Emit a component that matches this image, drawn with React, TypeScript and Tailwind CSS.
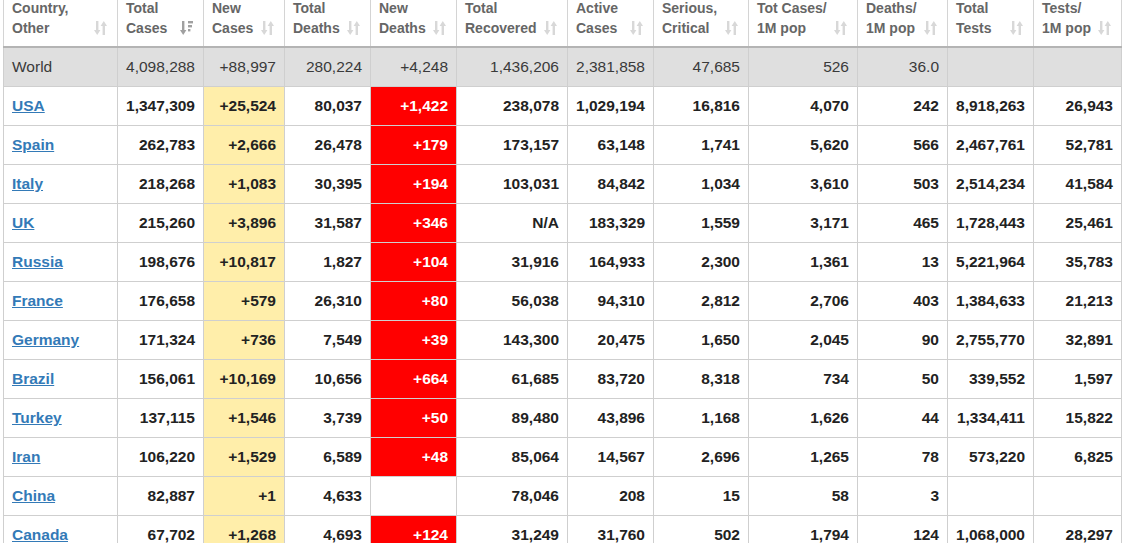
import React from "react"

type Row = {
  name: string
  cells: string[]
}

const headers = [
  ["Country,", "Other"],
  ["Total", "Cases"],
  ["New", "Cases"],
  ["Total", "Deaths"],
  ["New", "Deaths"],
  ["Total", "Recovered"],
  ["Active", "Cases"],
  ["Serious,", "Critical"],
  ["Tot Cases/", "1M pop"],
  ["Deaths/", "1M pop"],
  ["Total", "Tests"],
  ["Tests/", "1M pop"],
]

const widths = [114, 86, 81, 86, 86, 111, 86, 95, 109, 90, 86, 88]

const world = ["4,098,288", "+88,997", "280,224", "+4,248", "1,436,206", "2,381,858", "47,685", "526", "36.0", "", ""]

const rows: Row[] = [
  { name: "USA", cells: ["1,347,309", "+25,524", "80,037", "+1,422", "238,078", "1,029,194", "16,816", "4,070", "242", "8,918,263", "26,943"] },
  { name: "Spain", cells: ["262,783", "+2,666", "26,478", "+179", "173,157", "63,148", "1,741", "5,620", "566", "2,467,761", "52,781"] },
  { name: "Italy", cells: ["218,268", "+1,083", "30,395", "+194", "103,031", "84,842", "1,034", "3,610", "503", "2,514,234", "41,584"] },
  { name: "UK", cells: ["215,260", "+3,896", "31,587", "+346", "N/A", "183,329", "1,559", "3,171", "465", "1,728,443", "25,461"] },
  { name: "Russia", cells: ["198,676", "+10,817", "1,827", "+104", "31,916", "164,933", "2,300", "1,361", "13", "5,221,964", "35,783"] },
  { name: "France", cells: ["176,658", "+579", "26,310", "+80", "56,038", "94,310", "2,812", "2,706", "403", "1,384,633", "21,213"] },
  { name: "Germany", cells: ["171,324", "+736", "7,549", "+39", "143,300", "20,475", "1,650", "2,045", "90", "2,755,770", "32,891"] },
  { name: "Brazil", cells: ["156,061", "+10,169", "10,656", "+664", "61,685", "83,720", "8,318", "734", "50", "339,552", "1,597"] },
  { name: "Turkey", cells: ["137,115", "+1,546", "3,739", "+50", "89,480", "43,896", "1,168", "1,626", "44", "1,334,411", "15,822"] },
  { name: "Iran", cells: ["106,220", "+1,529", "6,589", "+48", "85,064", "14,567", "2,696", "1,265", "78", "573,220", "6,825"] },
  { name: "China", cells: ["82,887", "+1", "4,633", "", "78,046", "208", "15", "58", "3", "", ""] },
  { name: "Canada", cells: ["67,702", "+1,268", "4,693", "+124", "31,249", "31,760", "502", "1,794", "124", "1,068,000", "28,297"] },
]

function SortIcon({ active }: { active?: boolean }) {
  const c = active ? "#a0a0a0" : "#d8d8d8"
  return (
    <svg width="13" height="16" viewBox="0 0 13 16" className="shrink-0">
      {/* down arrow */}
      <rect x="2" y="1" width="2.4" height="10" fill={c} />
      <path d="M0 10 H6.4 L3.2 15 Z" fill={c} />
      {active ? (
        <>
          <rect x="8" y="1" width="5" height="2.4" fill={c} />
          <rect x="8" y="5" width="4" height="2.4" fill={c} />
          <rect x="8" y="9" width="2.4" height="2.4" fill={c} />
        </>
      ) : (
        <>
          <path d="M6.6 6 H13 L9.8 1 Z" fill={c} />
          <rect x="8.6" y="5" width="2.4" height="10" fill={c} />
        </>
      )}
    </svg>
  )
}

export default function App() {
  return (
    <div
      className="bg-white w-[1123px] h-[543px] overflow-hidden pl-[3px]"
      style={{ fontFamily: '"Liberation Sans", Arial, sans-serif' }}
    >
      <table className="table-fixed border-collapse w-[1118px] -mt-[2px]">
        <colgroup>
          {widths.map((w, i) => (
            <col key={i} style={{ width: w }} />
          ))}
        </colgroup>
        <thead>
          <tr>
            {headers.map((h, i) => (
              <th
                key={i}
                className="h-[49px] border-x border-[#d4d4d4] border-b-2 border-b-[#b4b4b4] px-2 p-0 text-left align-top font-bold text-[14px] leading-5 text-[#666]"
              >
                <div>{h[0]}</div>
                <div className="flex items-center justify-between pr-[2px]">
                  <span>{h[1]}</span>
                  <SortIcon active={i === 1} />
                </div>
              </th>
            ))}
          </tr>
        </thead>
        <tbody>
          <tr className="bg-[#dfdfdf] text-[15.5px] text-[#3a3a3a]">
            <td className="h-[39px] border border-[#cfcfcf] pl-2 text-left">World</td>
            {world.map((v, i) => (
              <td key={i} className="h-[39px] border border-[#cfcfcf] pr-[8px] text-right">
                {v}
              </td>
            ))}
          </tr>
          {rows.map((r) => (
            <tr key={r.name} className="text-[15.5px] font-bold text-[#222]">
              <td className="h-[39px] border border-[#cfcfcf] pl-2 text-left">
                <a href="#" className="text-[#337ab7] underline">
                  {r.name}
                </a>
              </td>
              {r.cells.map((v, i) => {
                let cls = "h-[39px] border border-[#cfcfcf] pr-[8px] text-right"
                if (i === 1) cls += " bg-[#ffeeaa]"
                if (i === 3 && v) cls += " bg-[#ff0000] text-white"
                return (
                  <td key={i} className={cls}>
                    {v}
                  </td>
                )
              })}
            </tr>
          ))}
        </tbody>
      </table>
    </div>
  )
}
